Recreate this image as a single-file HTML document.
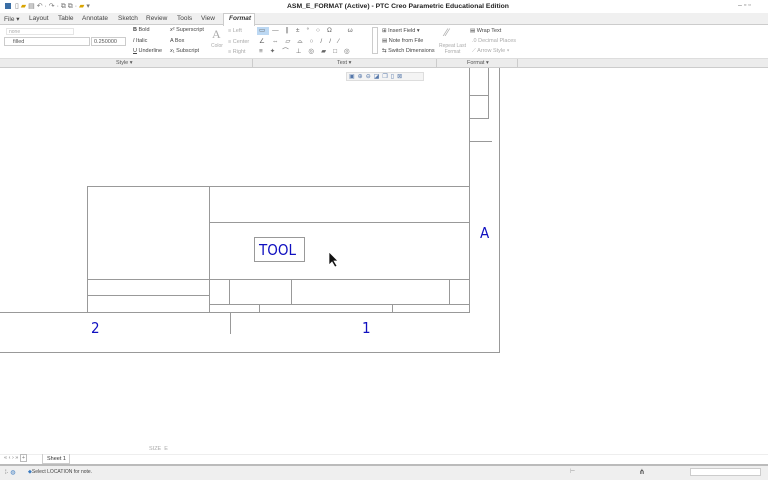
<!DOCTYPE html><html><head><style>
*{margin:0;padding:0;box-sizing:border-box}
body{width:768px;height:480px;overflow:hidden;background:#fff;font-family:"Liberation Sans",sans-serif;font-size:6px;color:#333;position:relative}
.a{position:absolute;white-space:nowrap}
.l{position:absolute;background:#999}
.t{font-size:6.5px;color:#444}
.g{color:#aaa}
.d{position:absolute;font-family:"DejaVu Sans Condensed","DejaVu Sans",sans-serif;color:#1010c0;font-size:15px}
</style></head><body>
<div class="a" style="left:287px;top:3px;font-size:6.8px;color:#222;font-weight:bold">ASM_E_FORMAT (Active) - PTC Creo Parametric Educational Edition</div>
<div class="a" style="left:5px;top:3px;width:6px;height:6px;background:#3a6ea5"></div>
<div class="a" style="left:15px;top:2px;font-size:7px;color:#777">▯ <span style="color:#d9a400">▰</span> ▤ ↶ · ↷ · ⧉ ⧉ · <span style="color:#d9a400">▰</span> ▾</div>
<div class="a" style="left:738px;top:2px;font-size:7px;color:#777">– ▫ ▫</div>
<div class="a" style="left:726px;top:14px;font-size:8px;color:#444">⌂ ⚲ ● · ●</div>
<!-- tabs -->
<div class="a" style="left:0;top:13px;width:768px;height:12px;background:#f0f0f0;border-bottom:1px solid #ccc"></div>
<div class="a t" style="left:4px;top:15px">File ▾</div>
<div class="a t" style="left:29px;top:15px">Layout</div>
<div class="a t" style="left:58px;top:15px">Table</div>
<div class="a t" style="left:82px;top:15px">Annotate</div>
<div class="a t" style="left:118px;top:15px">Sketch</div>
<div class="a t" style="left:146px;top:15px">Review</div>
<div class="a t" style="left:177px;top:15px">Tools</div>
<div class="a t" style="left:201px;top:15px">View</div>
<div class="a" style="left:223px;top:13px;width:32px;height:13px;background:#fff;border:1px solid #ccc;border-bottom:none"></div>
<div class="a t" style="left:229px;top:15px;font-style:italic;font-weight:bold;color:#333">Format</div>
<!-- ribbon -->
<div class="a g" style="left:6px;top:28px;width:68px;height:7px;border:1px solid #e5e5e5;font-size:5px;padding-left:2px">none</div>
<div class="a" style="left:4px;top:37px;width:86px;height:9px;border:1px solid #ccc;font-size:5.5px;padding:1px 8px;color:#555">filled</div>
<div class="a" style="left:91px;top:37px;width:35px;height:9px;border:1px solid #ccc;font-size:5.5px;padding:1px 2px;color:#555">0.250000</div>
<div class="a t" style="left:133px;top:27px;font-size:5.5px"><b>B</b> Bold</div>
<div class="a t" style="left:133px;top:38px;font-size:5.5px"><i>I</i> Italic</div>
<div class="a t" style="left:133px;top:48px;font-size:5.5px"><u>U</u> Underline</div>
<div class="a t" style="left:170px;top:27px;font-size:5.5px"><i>x</i>² Superscript</div>
<div class="a t" style="left:170px;top:38px;font-size:5.5px">A Box</div>
<div class="a t" style="left:170px;top:48px;font-size:5.5px"><i>x</i>₁ Subscript</div>
<div class="a g" style="left:212px;top:27px;font-size:12px;font-family:'Liberation Serif',serif">A</div>
<div class="a g" style="left:211px;top:43px;font-size:5px">Color</div>
<div class="a g" style="left:228px;top:28px;font-size:5.5px">≡ Left</div>
<div class="a g" style="left:228px;top:39px;font-size:5.5px">≡ Center</div>
<div class="a g" style="left:228px;top:49px;font-size:5.5px">≡ Right</div>
<div class="a" style="left:257px;top:27px;width:12px;height:8px;background:#bcd8f3"></div>
<div class="a" style="left:259px;top:26px;font-size:6.5px;color:#666;letter-spacing:7px;line-height:10.5px">▭—∥±°○Ω ω<br>∠⇔▱⌓○//∕<br>≡✦⌒⊥◎▰□◎</div>
<div class="a" style="left:372px;top:27px;width:6px;height:27px;border:1px solid #ccc"></div>
<div class="a t" style="left:382px;top:28px;font-size:5.5px">⊞ Insert Field ▾</div>
<div class="a t" style="left:382px;top:38px;font-size:5.5px">▤ Note from File</div>
<div class="a t" style="left:382px;top:48px;font-size:5.5px">⇆ Switch Dimensions</div>
<div class="a g" style="left:445px;top:27px;font-size:11px">⁄⁄</div>
<div class="a g" style="left:439px;top:43px;font-size:5px;text-align:center;line-height:6px">Repeat Last<br>Format</div>
<div class="a t" style="left:470px;top:28px;font-size:5.5px">▤ Wrap Text</div>
<div class="a g" style="left:472px;top:38px;font-size:5.5px">.0 Decimal Places</div>
<div class="a g" style="left:472px;top:48px;font-size:5.5px">⟋ Arrow Style ▾</div>
<!-- group bar -->
<div class="a" style="left:0;top:58px;width:768px;height:10px;background:#ececec;border-top:1px solid #ddd;border-bottom:1px solid #ccc"></div>
<div class="a" style="left:116px;top:60px;font-size:5.5px;color:#555">Style ▾</div>
<div class="a" style="left:337px;top:60px;font-size:5.5px;color:#555">Text ▾</div>
<div class="a" style="left:467px;top:60px;font-size:5.5px;color:#555">Format ▾</div>
<div class="a" style="left:252px;top:59px;width:1px;height:8px;background:#ccc"></div>
<div class="a" style="left:436px;top:59px;width:1px;height:8px;background:#ccc"></div>
<div class="a" style="left:517px;top:59px;width:1px;height:8px;background:#ccc"></div>
<!-- view toolbar -->
<div class="a" style="left:346px;top:72px;width:78px;height:9px;background:#f4f4f4;border:1px solid #ddd;font-size:6px;color:#5577aa;letter-spacing:3px;padding-left:2px">▣⊕⊖◪❐▯⊠</div>
<!-- drawing -->
<div class="l" style="left:499px;top:68px;width:1px;height:285px"></div>
<div class="l" style="left:0;top:352px;width:500px;height:1px"></div>
<div class="l" style="left:0;top:312px;width:470px;height:1px"></div>
<div class="l" style="left:469px;top:68px;width:1px;height:245px"></div>
<div class="l" style="left:488px;top:68px;width:1px;height:50px"></div>
<div class="l" style="left:469px;top:95px;width:20px;height:1px"></div>
<div class="l" style="left:469px;top:118px;width:20px;height:1px"></div>
<div class="l" style="left:469px;top:141px;width:23px;height:1px"></div>
<div class="l" style="left:87px;top:186px;width:383px;height:1px"></div>
<div class="l" style="left:87px;top:186px;width:1px;height:126px"></div>
<div class="l" style="left:209px;top:186px;width:1px;height:126px"></div>
<div class="l" style="left:209px;top:222px;width:260px;height:1px"></div>
<div class="l" style="left:87px;top:279px;width:382px;height:1px"></div>
<div class="l" style="left:87px;top:295px;width:122px;height:1px"></div>
<div class="l" style="left:209px;top:304px;width:260px;height:1px"></div>
<div class="l" style="left:229px;top:279px;width:1px;height:25px"></div>
<div class="l" style="left:291px;top:279px;width:1px;height:25px"></div>
<div class="l" style="left:449px;top:279px;width:1px;height:25px"></div>
<div class="l" style="left:259px;top:304px;width:1px;height:8px"></div>
<div class="l" style="left:392px;top:304px;width:1px;height:8px"></div>
<div class="l" style="left:230px;top:312px;width:1px;height:22px"></div>
<div class="a" style="left:254px;top:237px;width:51px;height:25px;border:1px solid #999"></div>
<div class="d" style="left:259px;top:241px">TOOL</div>
<div class="d" style="left:480px;top:224px">A</div>
<div class="d" style="left:91px;top:319px">2</div>
<div class="d" style="left:362px;top:319px">1</div>
<svg class="a" style="left:328px;top:251px" width="12" height="17"><path d="M1 1 L1 14 L4 11 L7 16 L9 15 L6 10 L10 10 Z" fill="#111" stroke="#fff" stroke-width=".7"/></svg>
<div class="a" style="left:149px;top:446px;font-size:5.5px;color:#aaa">SIZE &nbsp;E</div>
<!-- sheet bar -->
<div class="a" style="left:0;top:454px;width:768px;height:10px;background:#fff;border-top:1px solid #eee"></div>
<div class="a" style="left:4px;top:455px;font-size:5.5px;color:#777">« ‹ › » <span style="border:1px solid #bbb;padding:0 1px">+</span></div>
<div class="a" style="left:42px;top:454px;width:28px;height:10px;border:1px solid #ccc;border-top:none;font-size:5.5px;padding:2px 4px;color:#333">Sheet 1</div>
<div class="a" style="left:0;top:464px;width:768px;height:16px;background:#efefef;border-top:2px solid #bbb"></div>
<div class="a" style="left:5px;top:469px;font-size:6px;color:#666">⁞· <span style="color:#3a7ac0">◍</span></div>
<div class="a" style="left:28px;top:469px;font-size:5px;color:#444"><span style="color:#3a7ac0">◆</span>Select LOCATION for note.</div>
<div class="a" style="left:570px;top:468px;font-size:6px;color:#999">⊢</div>
<div class="a" style="left:639px;top:468px;font-size:7px;color:#333">⋔</div>
<div class="a" style="left:690px;top:468px;width:71px;height:8px;background:#fff;border:1px solid #ccc"></div>
</body></html>
